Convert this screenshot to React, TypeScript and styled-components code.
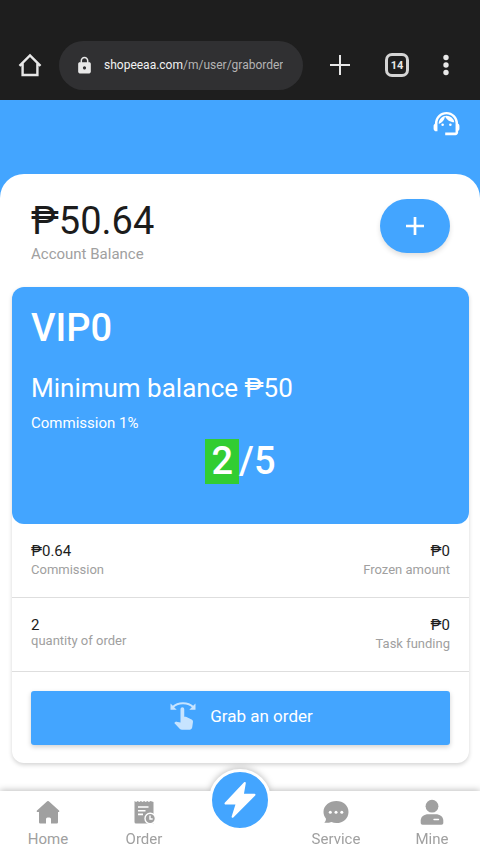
import React from "react";
import styled, { createGlobalStyle } from "styled-components";
import { MdLock, MdSupportAgent, MdSwipe } from "react-icons/md";

const blue = "#43a5ff";
const muted = "#a0a0a0";

const GlobalStyle = createGlobalStyle`
  *, *::before, *::after { box-sizing: border-box; }
  body {
    margin: 0;
    background: #fff;
    color: #1c1c1c;
    font-family: Roboto, "Liberation Sans", sans-serif;
  }
  h1, h2, p, dl, dt, dd { margin: 0; font-weight: 400; }
  button { border: 0; padding: 0; font: inherit; cursor: pointer; }
  svg { display: block; flex: none; }
`;

const Screen = styled.div`
  min-height: 100vh;
  display: flex;
  flex-direction: column;
  background: ${blue};
`;

const BrowserBar = styled.header`
  display: flex;
  align-items: center;
  height: 100px;
  padding: 30px 22px 0 18px;
  background: #1e1e1e;
  color: #e8e8e8;
`;

const BarButton = styled.button<{ $gap: number }>`
  display: flex;
  justify-content: center;
  width: 24px;
  margin-left: ${(p) => p.$gap}px;
  background: none;
  color: inherit;
`;

const AddressField = styled.div`
  flex: 1;
  min-width: 0;
  display: flex;
  align-items: center;
  gap: 10px;
  height: 49px;
  margin-left: 17px;
  padding: 0 16px;
  border-radius: 25px;
  background: #303032;
  font-size: 12px;
  color: #b4b4b4;
`;

const Url = styled.span`
  white-space: nowrap;
  overflow: hidden;
  b { font-weight: 400; color: #f2f2f2; }
`;

const Banner = styled.div`
  display: flex;
  justify-content: flex-end;
  height: 74px;
  padding: 8px 18px;
`;

const SupportButton = styled.button`
  align-self: flex-start;
  background: none;
  color: #fff;
`;

const Sheet = styled.main`
  flex: 1;
  padding: 24px 11px 90px 12px;
  border-radius: 24px 24px 0 0;
  background: #fff;
`;

const BalanceRow = styled.section`
  display: flex;
  justify-content: space-between;
  align-items: flex-start;
  padding: 0 19px;
  height: 89px;
`;

const Balance = styled.h1`
  font-size: 38px;
  line-height: 46px;
`;

const Caption = styled.p`
  font-size: 15px;
  line-height: 20px;
  color: ${muted};
`;

const AddButton = styled.button`
  display: grid;
  place-items: center;
  width: 70px;
  height: 54px;
  margin-top: 1px;
  border-radius: 27px;
  background: ${blue};
  color: #fff;
  box-shadow: 0 3px 5px rgba(0, 0, 0, 0.12);
`;

const Card = styled.section`
  border-radius: 12px;
  background: #fff;
  box-shadow: 0 2px 4px rgba(0, 0, 0, 0.17);
`;

const VipPanel = styled.div`
  height: 237px;
  padding: 18px 19px;
  border-radius: 12px;
  background: ${blue};
  color: #fff;
`;

const VipName = styled.h2`
  font-size: 38px;
  font-weight: 500;
  line-height: 46px;
`;

const Minimum = styled.p`
  margin-top: 21px;
  font-size: 26px;
  line-height: 32px;
`;

const Rate = styled.p`
  margin-top: 9px;
  font-size: 15px;
  line-height: 20px;
`;

const Progress = styled.p`
  display: flex;
  justify-content: center;
  margin-top: 6px;
  font-size: 38px;
  font-weight: 500;
  line-height: 45px;
`;

const Done = styled.span`
  padding: 0 6px;
  background: #32cd32;
`;

const StatRow = styled.dl`
  display: flex;
  justify-content: space-between;
  height: 74px;
  padding: 18px 19px;
  border-bottom: 1px solid #dedede;
`;

const Stat = styled.div<{ $end?: boolean }>`
  display: flex;
  flex-direction: column-reverse;
  align-self: flex-start;
  text-align: ${(p) => (p.$end ? "right" : "left")};
`;

const StatLabel = styled.dt<{ $tight?: boolean }>`
  font-size: 13px;
  line-height: ${(p) => (p.$tight ? 14 : 20)}px;
  color: ${muted};
`;

const StatValue = styled.dd`
  font-size: 15px;
  line-height: 18px;
`;

const Action = styled.div`
  padding: 19px 19px 18px;
`;

const GrabButton = styled.button`
  display: flex;
  align-items: center;
  justify-content: center;
  gap: 12px;
  width: 100%;
  height: 54px;
  border-radius: 3px;
  padding-bottom: 4px;
  background: ${blue};
  color: #fff;
  font-size: 17px;
  box-shadow: 0 2px 5px rgba(0, 0, 0, 0.18);
  svg { opacity: 0.7; }
`;

const TabBar = styled.nav`
  position: fixed;
  inset: auto 0 0;
  display: grid;
  grid-template-columns: repeat(5, 1fr);
  height: 63px;
  background: #fff;
  filter: drop-shadow(0 -1px 3px rgba(0, 0, 0, 0.25));
`;

const Tab = styled.a`
  display: flex;
  flex-direction: column;
  align-items: center;
  gap: 4px;
  padding-top: 8px;
  color: ${muted};
  font-size: 15px;
  line-height: 20px;
  text-decoration: none;
`;

const BoltButton = styled.a`
  justify-self: center;
  display: grid;
  place-items: center;
  width: 62px;
  height: 62px;
  margin-top: -22px;
  border: 3px solid #fff;
  border-radius: 50%;
  background: ${blue};
`;

const HomeOutline = () => (
  <svg width="24" height="24" viewBox="0 0 24 24" fill="none" stroke="currentColor" strokeWidth="2.4">
    <path d="M1.500 12.800 12 2.500l10.500 10.300M4.600 10.500V22h14.800V10.500" />
  </svg>
);

const PlusIcon = ({ size, stroke }: { size: number; stroke: number }) => (
  <svg width={size} height={size} viewBox="0 0 20 20" stroke="currentColor" strokeWidth={stroke}>
    <path d="M10 0v20M0 10h20" />
  </svg>
);

const TabsBadge = styled.span`
  display: grid;
  place-items: center;
  width: 24px;
  height: 24px;
  border: 3px solid #d4d4d4;
  border-radius: 7px;
  font-size: 11px;
  font-weight: 700;
`;

const DotsIcon = () => (
  <svg width="6" height="22" viewBox="0 0 6 22" fill="currentColor">
    <circle cx="3" cy="3.500" r="2.700" />
    <circle cx="3" cy="11" r="2.700" />
    <circle cx="3" cy="18.500" r="2.700" />
  </svg>
);

const HomeIcon = () => (
  <svg width="26" height="26" viewBox="0 0 26 26" fill="currentColor">
    <path d="M12.200 2.300a1.200 1.200 0 0 1 1.600 0l10.200 9.200c.7.700.3 1.600-.7 1.600H23v10.200a1.200 1.200 0 0 1-1.200 1.200H16v-4.400a1.500 1.500 0 0 0-1.500-1.500h-2a1.500 1.500 0 0 0-1.500 1.500v4.400H5.200A1.200 1.200 0 0 1 4 23.300V13.100H2.700c-1 0-1.400-.900-.7-1.600z" />
  </svg>
);

const OrderIcon = () => (
  <svg width="26" height="26" viewBox="0 0 26 26">
    <path fill="currentColor" d="M3.500 2l1.600 1 1.600-1 1.600 1 1.600-1 1.600 1 1.600-1 1.600 1 1.600-1 1.600 1 1.600-1L22.500 3v21.500H5A1.500 1.500 0 0 1 3.500 23z" />
    <path stroke="#fff" strokeWidth="1.600" d="M7 8h10.500M7 11.700h7.500M7 15.400h5" />
    <circle cx="19.200" cy="19.500" r="5.200" fill="currentColor" stroke="#fff" strokeWidth="1.400" />
    <path d="M19 16.500V20h2.700" fill="none" stroke="#fff" strokeWidth="1.400" />
  </svg>
);

const ServiceIcon = () => (
  <svg width="26" height="26" viewBox="0 0 26 26">
    <path fill="currentColor" d="M13.400 2C20.300 2 25.500 6.500 25.500 12.900S20.300 24 13.400 24c-1.800 0-3.500-.3-5-1C6.500 23.800 4 24 1.300 23.800c1.200-1.500 1.800-2.800 1.600-4.400C1.400 17.600.5 15.400.5 12.900.5 6.500 6.400 2 13.400 2z" />
    <g fill="#fff">
      <circle cx="7.300" cy="13.300" r="1.500" />
      <circle cx="13" cy="13.300" r="1.500" />
      <circle cx="18.800" cy="13.300" r="1.500" />
    </g>
  </svg>
);

const MineIcon = () => (
  <svg width="26" height="26" viewBox="0 0 26 26">
    <circle cx="13" cy="7.200" r="6.400" fill="currentColor" />
    <path fill="currentColor" d="M9.500 15.200h7c4.500 0 7.800 2.300 7.800 6.300v2.300c0 1.200-.7 1.900-1.900 1.900H3.600c-1.200 0-1.900-.7-1.900-1.900v-2.300c0-4 3.300-6.300 7.800-6.300z" />
    <path d="M15 20.500h4.500" stroke="#fff" strokeWidth="1.400" strokeLinecap="round" />
  </svg>
);

const BoltIcon = () => (
  <svg width="32" height="38" viewBox="0 0 32 38">
    <path fill="#fff" stroke="#fff" strokeWidth="2" strokeLinejoin="round" d="M20.800 2 1.500 22.500h11.300L8.600 35.800 30.500 13.700H18.800z" />
  </svg>
);

const stats = [
  [
    { value: "₱0.64", label: "Commission" },
    { value: "₱0", label: "Frozen amount" },
  ],
  [
    { value: "2", label: "quantity of order", tight: true },
    { value: "₱0", label: "Task funding" },
  ],
];

export default function App() {
  return (
    <Screen>
      <GlobalStyle />
      <BrowserBar>
        <BarButton $gap={0} aria-label="Home page"><HomeOutline /></BarButton>
        <AddressField>
          <MdLock size={19} color="#e8e8e8" />
          <Url><b>shopeeaa.com</b>/m/user/graborder</Url>
        </AddressField>
        <BarButton $gap={25} aria-label="New tab"><PlusIcon size={20} stroke={2} /></BarButton>
        <BarButton $gap={33} aria-label="Open tabs"><TabsBadge>14</TabsBadge></BarButton>
        <BarButton $gap={25} aria-label="Menu"><DotsIcon /></BarButton>
      </BrowserBar>

      <Banner>
        <SupportButton aria-label="Support"><MdSupportAgent size={31} /></SupportButton>
      </Banner>

      <Sheet>
        <BalanceRow>
          <div>
            <Balance>₱50.64</Balance>
            <Caption>Account Balance</Caption>
          </div>
          <AddButton aria-label="Add funds"><PlusIcon size={18} stroke={3} /></AddButton>
        </BalanceRow>

        <Card>
          <VipPanel>
            <VipName>VIP0</VipName>
            <Minimum>Minimum balance ₱50</Minimum>
            <Rate>Commission 1%</Rate>
            <Progress><Done>2</Done>/5</Progress>
          </VipPanel>
          {stats.map((row) => (
            <StatRow key={row[0].label}>
              {row.map((s, i) => (
                <Stat key={s.label} $end={i === 1}>
                  <StatLabel $tight={"tight" in s}>{s.label}</StatLabel>
                  <StatValue>{s.value}</StatValue>
                </Stat>
              ))}
            </StatRow>
          ))}
          <Action>
            <GrabButton><MdSwipe size={30} /><span>Grab an order</span></GrabButton>
          </Action>
        </Card>
      </Sheet>

      <TabBar>
        <Tab href="#home"><HomeIcon />Home</Tab>
        <Tab href="#order"><OrderIcon />Order</Tab>
        <BoltButton href="#grab" aria-label="Grab"><BoltIcon /></BoltButton>
        <Tab href="#service"><ServiceIcon />Service</Tab>
        <Tab href="#mine"><MineIcon />Mine</Tab>
      </TabBar>
    </Screen>
  );
}
